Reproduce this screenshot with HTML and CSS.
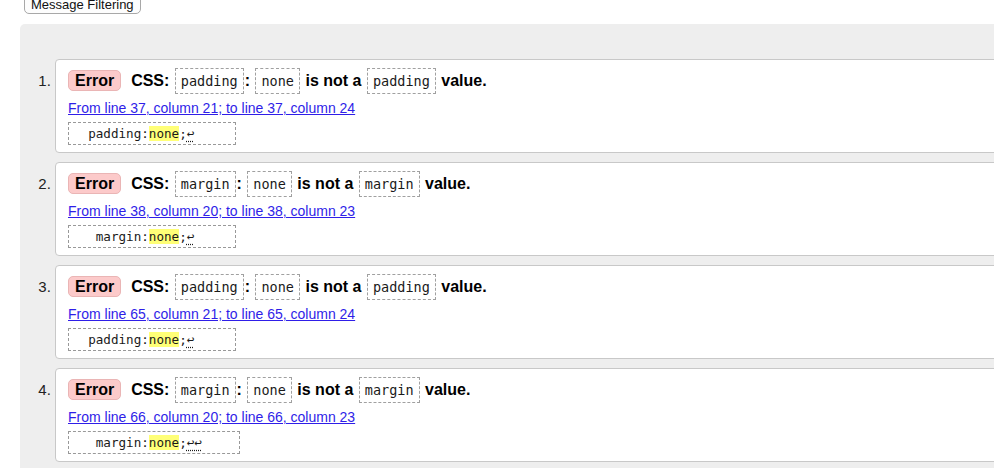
FILE: index.html
```html
<!DOCTYPE html>
<html lang="en">
<head>
<meta charset="utf-8">
<title>CSS Validation Messages</title>
<link rel="stylesheet" href="styles.css">
</head>
<body>
<div class="page">
  <button class="filter" type="button">Message Filtering</button>
  <div class="panel">
    <ol class="messages">
      <li class="card">
        <div class="title"><span class="badge">Error</span><strong class="msg">CSS: <code>padding</code>: <code>none</code> is not a <code>padding</code> value.</strong></div>
        <div class="loc"><a href="#">From line 37, column 21; to line 37, column 24</a></div>
        <code class="extract">  padding:<mark>none</mark>;<abbr title="Line break">↩</abbr></code>
      </li>
      <li class="card">
        <div class="title"><span class="badge">Error</span><strong class="msg">CSS: <code>margin</code>: <code>none</code> is not a <code>margin</code> value.</strong></div>
        <div class="loc"><a href="#">From line 38, column 20; to line 38, column 23</a></div>
        <code class="extract">   margin:<mark>none</mark>;<abbr title="Line break">↩</abbr></code>
      </li>
      <li class="card">
        <div class="title"><span class="badge">Error</span><strong class="msg">CSS: <code>padding</code>: <code>none</code> is not a <code>padding</code> value.</strong></div>
        <div class="loc"><a href="#">From line 65, column 21; to line 65, column 24</a></div>
        <code class="extract">  padding:<mark>none</mark>;<abbr title="Line break">↩</abbr></code>
      </li>
      <li class="card">
        <div class="title"><span class="badge">Error</span><strong class="msg">CSS: <code>margin</code>: <code>none</code> is not a <code>margin</code> value.</strong></div>
        <div class="loc"><a href="#">From line 66, column 20; to line 66, column 23</a></div>
        <code class="extract wide">   margin:<mark>none</mark>;<abbr title="Line breaks">↩↩</abbr></code>
      </li>
    </ol>
  </div>
</div>
</body>
</html>
```

FILE: styles.css
```css
html, body {
  margin: 0;
  padding: 0;
  overflow: hidden;
  background: #fff;
}

body {
  font-family: "Liberation Sans", Arial, sans-serif;
  color: #000;
}

.page {
  padding-left: 20px;
  width: 1200px;
}

.filter {
  display: block;
  margin: -8px 0 0 4px;
  padding: 4px 6px 0 6px;
  height: 22px;
  box-sizing: border-box;
  font-family: "Liberation Sans", Arial, sans-serif;
  font-size: 13px;
  line-height: 16px;
  color: #111;
  background: #fdfdfd;
  border: 1px solid #a8a8a8;
  border-radius: 5px;
}

.panel {
  margin-top: 10px;
  width: 1100px;
  background: #eeeeee;
  border-radius: 5px 0 0 0;
  padding: 35px 0 20px 35px;
}

.messages {
  margin: 0;
  padding: 0;
  list-style: decimal outside;
}

.messages li::marker {
  font-size: 15px;
  color: #222;
}

.card {
  background: #fff;
  border: 1px solid #c8c8c8;
  border-radius: 4px;
  padding: 8px 12px 7px 12px;
  margin-bottom: 9px;
}

.title {
  line-height: 26px;
  height: 26px;
  font-size: 16px;
  white-space: nowrap;
}

.badge {
  display: inline-block;
  font-weight: bold;
  font-size: 16px;
  line-height: 19px;
  padding: 0 6px;
  background: #fccaca;
  border: 1px solid #eab5b5;
  border-radius: 5px;
  margin-right: 10px;
}

.msg {
  font-weight: bold;
}

.title code {
  display: inline-block;
  font-family: "DejaVu Sans Mono", monospace;
  font-weight: normal;
  font-size: 13.5px;
  line-height: 18px;
  padding: 3px 5px;
  margin: 0 1px;
  border: 1px dashed #a0a0a0;
  color: #1a1a1a;
}

.loc {
  margin-top: 6px;
  font-size: 14px;
  line-height: 17px;
}

.loc a {
  color: #2f1ee8;
  text-decoration: underline;
}

.extract {
  display: block;
  box-sizing: border-box;
  width: 168px;
  margin-top: 5px;
  padding: 2px 4px;
  border: 1px dashed #999;
  font-family: "DejaVu Sans Mono", monospace;
  font-size: 12.6px;
  line-height: 17px;
  white-space: pre;
  color: #1a1a1a;
}

.extract.wide {
  width: 172px;
}

.extract mark {
  background: #ffff77;
  color: inherit;
}

.extract abbr {
  text-decoration: underline dotted;
  text-underline-offset: 3px;
}
```
